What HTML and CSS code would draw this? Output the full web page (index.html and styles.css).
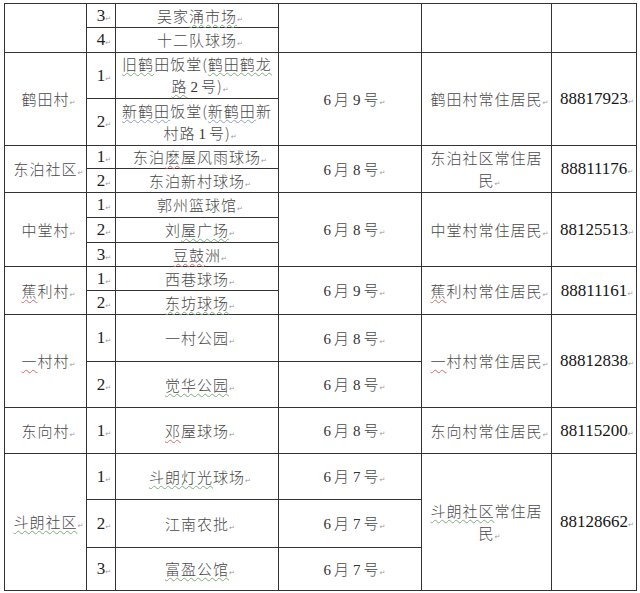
FILE: index.html
```html
<!DOCTYPE html>
<html lang="zh-CN">
<head>
<meta charset="utf-8">
<title>球场安排</title>
<link rel="stylesheet" href="styles.css">
</head>
<body>
<table class="grid">
  <colgroup>
    <col class="w-village"><col class="w-no"><col class="w-place"><col class="w-date"><col class="w-who"><col class="w-tel">
  </colgroup>
  <tbody>
    <tr class="h24">
      <td rowspan="2"></td>
      <td class="no">3<span class="pm">↵</span></td>
      <td class="tx">吴家<span class="sq-g">涌市场</span><span class="pm">↵</span></td>
      <td rowspan="2"></td>
      <td rowspan="2"></td>
      <td rowspan="2"></td>
    </tr>
    <tr class="h25">
      <td class="no">4<span class="pm">↵</span></td>
      <td class="tx">十二队球场<span class="pm">↵</span></td>
    </tr>

    <tr class="h46">
      <td class="tx" rowspan="2">鹤田村<span class="pm">↵</span></td>
      <td class="no">1<span class="pm">↵</span></td>
      <td class="tx"><span class="sq-g">旧鹤</span>田饭堂(<span class="sq-g">鹤田鹤龙</span><span class="sq-g">路</span><span class="dg">2</span>号)<span class="pm">↵</span></td>
      <td class="tx" rowspan="2"><span class="dg">6</span>月<span class="dg">9</span>号<span class="pm">↵</span></td>
      <td class="tx" rowspan="2">鹤田村常住居民<span class="pm">↵</span></td>
      <td class="tel" rowspan="2">88817923<span class="pm">↵</span></td>
    </tr>
    <tr class="h47">
      <td class="no">2<span class="pm">↵</span></td>
      <td class="tx"><span class="sq-b">新鹤田</span>饭堂(<span class="sq-b">新鹤田</span>新村路<span class="dg">1</span>号)<span class="pm">↵</span></td>
    </tr>

    <tr class="h23">
      <td class="tx" rowspan="2">东泊社区<span class="pm">↵</span></td>
      <td class="no">1<span class="pm">↵</span></td>
      <td class="tx">东泊<span class="sq-r">麽</span>屋风雨球场<span class="pm">↵</span></td>
      <td class="tx" rowspan="2"><span class="dg">6</span>月<span class="dg">8</span>号<span class="pm">↵</span></td>
      <td class="tx" rowspan="2">东泊社区常住居民<span class="pm">↵</span></td>
      <td class="tel" rowspan="2">88811176<span class="pm">↵</span></td>
    </tr>
    <tr class="h24">
      <td class="no">2<span class="pm">↵</span></td>
      <td class="tx">东泊新村球场<span class="pm">↵</span></td>
    </tr>

    <tr class="h25">
      <td class="tx" rowspan="3">中堂村<span class="pm">↵</span></td>
      <td class="no">1<span class="pm">↵</span></td>
      <td class="tx">郭州篮球馆<span class="pm">↵</span></td>
      <td class="tx" rowspan="3"><span class="dg">6</span>月<span class="dg">8</span>号<span class="pm">↵</span></td>
      <td class="tx" rowspan="3">中堂村常住居民<span class="pm">↵</span></td>
      <td class="tel" rowspan="3">88125513<span class="pm">↵</span></td>
    </tr>
    <tr class="h25">
      <td class="no">2<span class="pm">↵</span></td>
      <td class="tx">刘<span class="sq-g">屋广场</span><span class="pm">↵</span></td>
    </tr>
    <tr class="h24">
      <td class="no">3<span class="pm">↵</span></td>
      <td class="tx"><span class="sq-r">豆鼓</span>洲<span class="pm">↵</span></td>
    </tr>

    <tr class="h24">
      <td class="tx" rowspan="2"><span class="sq-r">蕉</span>利村<span class="pm">↵</span></td>
      <td class="no">1<span class="pm">↵</span></td>
      <td class="tx">西巷球场<span class="pm">↵</span></td>
      <td class="tx" rowspan="2"><span class="dg">6</span>月<span class="dg">9</span>号<span class="pm">↵</span></td>
      <td class="tx" rowspan="2"><span class="sq-r">蕉</span>利村常住居民<span class="pm">↵</span></td>
      <td class="tel" rowspan="2">88811161<span class="pm">↵</span></td>
    </tr>
    <tr class="h24">
      <td class="no">2<span class="pm">↵</span></td>
      <td class="tx"><span class="sq-g">东坊球场</span><span class="pm">↵</span></td>
    </tr>

    <tr class="h47">
      <td class="tx" rowspan="2"><span class="sq-r">一</span>村村<span class="pm">↵</span></td>
      <td class="no">1<span class="pm">↵</span></td>
      <td class="tx">一村公园<span class="pm">↵</span></td>
      <td class="tx"><span class="dg">6</span>月<span class="dg">8</span>号<span class="pm">↵</span></td>
      <td class="tx" rowspan="2"><span class="sq-r">一</span>村村常住居民<span class="pm">↵</span></td>
      <td class="tel" rowspan="2">88812838<span class="pm">↵</span></td>
    </tr>
    <tr class="h46">
      <td class="no">2<span class="pm">↵</span></td>
      <td class="tx"><span class="sq-g">觉华公园</span><span class="pm">↵</span></td>
      <td class="tx"><span class="dg">6</span>月<span class="dg">8</span>号<span class="pm">↵</span></td>
    </tr>

    <tr class="h46">
      <td class="tx">东向村<span class="pm">↵</span></td>
      <td class="no">1<span class="pm">↵</span></td>
      <td class="tx"><span class="sq-r">邓</span>屋球场<span class="pm">↵</span></td>
      <td class="tx"><span class="dg">6</span>月<span class="dg">8</span>号<span class="pm">↵</span></td>
      <td class="tx">东向村常住居民<span class="pm">↵</span></td>
      <td class="tel">88115200<span class="pm">↵</span></td>
    </tr>

    <tr class="h46">
      <td class="tx" rowspan="3"><span class="sq-g">斗朗社区</span><span class="pm">↵</span></td>
      <td class="no">1<span class="pm">↵</span></td>
      <td class="tx"><span class="sq-g">斗朗灯光</span>球场<span class="pm">↵</span></td>
      <td class="tx"><span class="dg">6</span>月<span class="dg">7</span>号<span class="pm">↵</span></td>
      <td class="tx" rowspan="3"><span class="sq-g">斗朗社区</span>常住居民<span class="pm">↵</span></td>
      <td class="tel" rowspan="3">88128662<span class="pm">↵</span></td>
    </tr>
    <tr class="h48">
      <td class="no">2<span class="pm">↵</span></td>
      <td class="tx">江南农批<span class="pm">↵</span></td>
      <td class="tx"><span class="dg">6</span>月<span class="dg">7</span>号<span class="pm">↵</span></td>
    </tr>
    <tr class="h43">
      <td class="no">3<span class="pm">↵</span></td>
      <td class="tx"><span class="sq-g">富盈公馆</span><span class="pm">↵</span></td>
      <td class="tx"><span class="dg">6</span>月<span class="dg">7</span>号<span class="pm">↵</span></td>
    </tr>
  </tbody>
</table>
</body>
</html>
```

FILE: styles.css
```css
html, body {
  margin: 0;
  padding: 0;
  background: #ffffff;
}

body {
  font-family: "Noto Sans CJK SC", "Noto Sans", sans-serif;
  overflow: hidden;
}

.grid {
  border-collapse: collapse;
  table-layout: fixed;
  width: 632px;
  margin: 3px 0 0 4px;
}

.w-village { width: 82px; }
.w-no { width: 29px; }
.w-place { width: 163px; }
.w-date { width: 143px; }
.w-who { width: 130px; }
.w-tel { width: 85px; }

.grid td {
  border: 1px solid #333333;
  padding: 0 6px;
  text-align: center;
  vertical-align: middle;
  line-height: 22px;
}

.h23 { height: 23px; }
.h24 { height: 24px; }
.h25 { height: 25px; }
.h43 { height: 43px; }
.h46 { height: 46px; }
.h47 { height: 47px; }
.h48 { height: 48px; }

.tx {
  font-family: "Noto Sans CJK SC", sans-serif;
  font-weight: 300;
  font-size: 15px;
  letter-spacing: 1px;
  color: #4a4a4a;
}

.grid td.no {
  padding: 0;
  font-family: "Liberation Serif", serif;
  font-size: 17px;
  color: #1e1e1e;
}

.grid td.tel {
  padding: 0 4px;
  font-family: "Liberation Serif", serif;
  font-size: 17px;
  color: #151515;
  white-space: nowrap;
}

.dg {
  font-family: "Liberation Serif", serif;
  font-size: 15px;
  letter-spacing: 0;
  margin: 0 3px;
  color: #333333;
}

.pm {
  display: inline-block;
  width: 0;
  font-family: "DejaVu Sans", sans-serif;
  font-size: 7px;
  line-height: 1;
  letter-spacing: 0;
  color: #9a9a9a;
  white-space: nowrap;
  font-weight: 400;
}

.sq-g, .sq-r, .sq-b {
  text-decoration-line: underline;
  text-decoration-style: wavy;
  text-decoration-thickness: 1px;
  text-underline-offset: 2px;
}

.sq-g { text-decoration-color: #79b07a; }
.sq-b { text-decoration-color: #8aa0b8; }
.sq-r { text-decoration-color: #d86a6a; }
```
